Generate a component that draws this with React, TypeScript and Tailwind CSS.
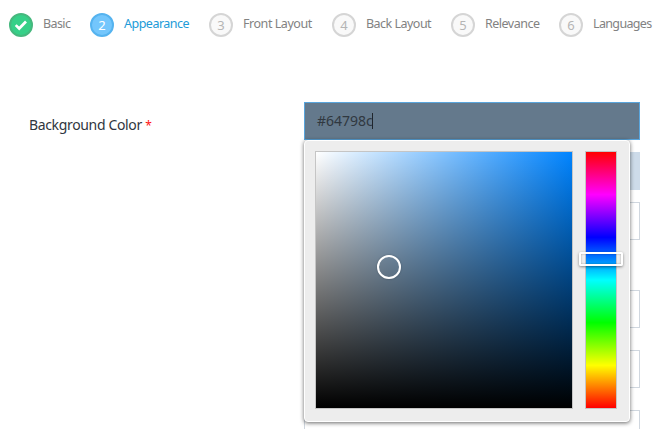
type StepState = 'done' | 'current' | 'pending';

const steps: { label: string; state: StepState; width: string; tracking: string }[] = [
  { label: 'Basic', state: 'done', width: 'w-[81px]', tracking: 'tracking-[-0.6px]' },
  { label: 'Appearance', state: 'current', width: 'w-[119px]', tracking: 'tracking-[-0.5px]' },
  { label: 'Front Layout', state: 'pending', width: 'w-[123px]', tracking: 'tracking-[-0.45px]' },
  { label: 'Back Layout', state: 'pending', width: 'w-[119px]', tracking: 'tracking-[-0.52px]' },
  { label: 'Relevance', state: 'pending', width: 'w-[108px]', tracking: 'tracking-[-0.5px]' },
  { label: 'Languages', state: 'pending', width: 'w-[100px]', tracking: 'tracking-[-0.65px]' },
];

const circleStyle: Record<StepState, string> = {
  done: 'border-[#46b87e] bg-[#36d088] text-white',
  current: 'border-[#55b3ef] bg-[#73c6fc] text-white',
  pending: 'border-[#d5d5d5] bg-[#f9f9f9] text-[#b5b5b5]',
};

function Steps() {
  return (
    <nav className="flex h-[50px] pl-[9px] pt-[13px]">
      {steps.map((step, i) => (
        <div key={step.label} className={`flex shrink-0 ${step.width}`}>
          <span
            className={`flex size-6 shrink-0 items-center justify-center rounded-full border-2 text-[13px] leading-5 ${circleStyle[step.state]}`}
          >
            {step.state === 'done' ? (
              <svg width="14" height="12" viewBox="0 0 14 12" fill="none">
                <path d="M1.7 6.1 5.2 9.5 12 2.5" stroke="white" strokeWidth="2.7" />
              </svg>
            ) : (
              i + 1
            )}
          </span>
          <span
            className={`ml-[10px] whitespace-nowrap text-[12.5px] leading-[22px] ${step.tracking} ${
              step.state === 'current' ? 'text-[#219bd8]' : 'text-[#828282]'
            }`}
          >
            {step.label}
          </span>
        </div>
      ))}
    </nav>
  );
}

function ColorPicker() {
  return (
    <div className="absolute left-0 top-[38px] flex h-[282px] w-[326px] gap-3 rounded-[4px] border border-white bg-[#ededed] pl-[10px] pt-[10px] shadow-[0_1px_4px_rgba(0,0,0,0.6)]">
      <div className="relative size-[258px] border border-[#c5c5c5]">
        <div className="size-full bg-[linear-gradient(to_top,#000,transparent),linear-gradient(to_right,#fff,#0084ff)]" />
        <div className="absolute left-[61px] top-[103px] size-6 rounded-full border-2 border-white shadow-[0_0_2px_rgba(0,0,0,0.3)]" />
      </div>
      <div className="relative h-[258px] w-8 border border-[#c5c5c5]">
        <div className="size-full bg-[linear-gradient(to_bottom,#f00_0%,#f0f_16.67%,#00f_33.33%,#0ff_50%,#0f0_66.67%,#ff0_83.33%,#f00_100%)]" />
        <div className="absolute -left-[7px] top-[100px] h-[14px] w-[44px] rounded-[2px] border-2 border-white shadow-[0_1px_3px_rgba(0,0,0,0.45),inset_0_0_2px_rgba(0,0,0,0.35)]" />
      </div>
    </div>
  );
}

export default function App() {
  return (
    <main className="h-[429px] w-[659px] overflow-hidden bg-white font-['Noto_Sans','Open_Sans',sans-serif]">
      <Steps />
      <section className="flex pl-[29px] pt-[52px]">
        <label className="w-[275px] pt-[12px] text-[14px] leading-[22px] tracking-[-0.35px] text-[#303640]">
          Background Color <span className="text-[12px] text-[#ff1111]">*</span>
        </label>
        <div className="relative w-[336px]">
          <div className="flex h-[38px] items-center border border-[#59a5dc] bg-[#64798c] pb-px pl-3 text-[14px] text-[#303840]">
            <span className="-mr-px">#64798c</span>
            <span className="h-4 w-px bg-[#20262d]" />
          </div>
          <div className="mt-3 h-[38px] bg-[#cddbe9]" />
          <div className="mt-3 h-[38px] border border-[#d0d7df]" />
          <div className="mt-[50px] h-[38px] border border-[#d0d7df]" />
          <div className="mt-[22px] h-[38px] border border-[#d0d7df]" />
          <div className="mt-[22px] h-[38px] border border-[#d0d7df]" />
          <ColorPicker />
        </div>
      </section>
    </main>
  );
}
